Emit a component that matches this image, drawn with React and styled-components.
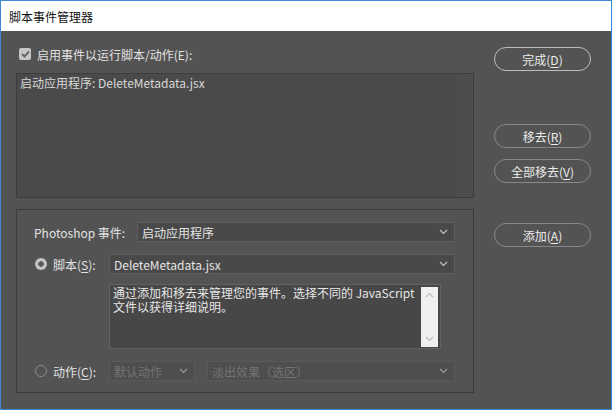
import styled, { createGlobalStyle } from 'styled-components';

const Global = createGlobalStyle`
  html, body { margin: 0; padding: 0; background: #535353; }
  body { font-family: "Noto Sans", "Noto Sans CJK SC", sans-serif; font-size: 12px; }
`;

const Window = styled.div`
  width: 612px;
  height: 410px;
  box-sizing: border-box;
  border: 1px solid #3c8ad6;
  display: flex;
  flex-direction: column;
  background: #535353;
`;

const TitleBar = styled.div`
  height: 30px;
  flex: none;
  background: #fff;
  color: #111;
  display: flex;
  align-items: center;
  padding-left: 8px;
  font-family: "Noto Sans CJK SC", sans-serif;
  font-size: 12px;
`;

const Body = styled.div`
  flex: 1;
  display: flex;
  padding: 13px 0 0 15px;
  color: #e2e2e2;
`;

const LeftCol = styled.div`
  width: 458px;
  display: flex;
  flex-direction: column;
`;

const RightCol = styled.div`
  width: 97px;
  margin-left: 20px;
  padding-top: 3px;
  display: flex;
  flex-direction: column;
`;

const Row = styled.div`
  display: flex;
  align-items: center;
  height: 20px;
  gap: ${p => p.$gap ?? 6}px;
  margin-top: ${p => p.$top || 0}px;
`;

const Check = styled.span`
  width: 12px;
  height: 12px;
  border-radius: 2px;
  background: #c6c6c6;
  display: flex;
  align-items: center;
  justify-content: center;
  margin-left: 3px;
`;

const Label = styled.span`
  font-family: "Noto Sans CJK SC", sans-serif;
  font-size: 12px;
  color: ${p => (p.$dim ? '#777' : '#e2e2e2')};
  white-space: nowrap;
  width: ${p => (p.$w ? p.$w + 'px' : 'auto')};
  padding-left: ${p => p.$pad || 0}px;
  box-sizing: border-box;
  flex: none;
`;

const Key = styled.span`
  text-decoration: ${p => (p.$plain ? 'none' : 'underline')};
  text-underline-offset: 2px;
`;

const ListBox = styled.div`
  margin-top: 9px;
  height: 125px;
  box-sizing: border-box;
  border: 1px solid #3d3d3d;
  background: linear-gradient(to right, #4a4a4a 0, #4a4a4a 440px, #4d4d4d 440px);
  padding: 0 3px;
  line-height: 17px;
  font-family: "Noto Sans CJK SC", sans-serif;
  color: #d8d8d8;
`;

const Group = styled.div`
  margin-top: 11px;
  height: 184px;
  box-sizing: border-box;
  border: 1px solid #3b3b3b;
  padding: 12px 18px 0 17px;
  display: flex;
  flex-direction: column;
`;

const Select = styled.div`
  height: 20px;
  box-sizing: border-box;
  border: 1px solid #5e5e5e;
  background: #494949;
  display: flex;
  align-items: center;
  justify-content: space-between;
  padding: 0 6px 0 4px;
  font-family: "Noto Sans CJK SC", sans-serif;
  color: ${p => (p.$dim ? '#747474' : '#e4e4e4')};
  width: ${p => (p.$w ? p.$w + 'px' : 'auto')};
  flex: ${p => (p.$w ? 'none' : '1')};
  margin-left: ${p => p.$ml || 0}px;
  ${p => p.$dim && 'border-color: #595959; background: #4e4e4e;'}
`;

const Radio = styled.span`
  width: 12px;
  height: 12px;
  box-sizing: border-box;
  border-radius: 50%;
  flex: none;
  margin-left: 1px;
  ${p =>
    p.$on
      ? 'background: radial-gradient(circle, #5a5a5a 0 2.5px, #c4c4c4 3px);'
      : 'border: 1.5px solid #8c8c8c;'}
`;

const TextArea = styled.div`
  margin: 10px 0 0 75px;
  width: 332px;
  height: 65px;
  box-sizing: border-box;
  border: 1px solid #626262;
  background: #474747;
  display: flex;
`;

const TextBody = styled.div`
  flex: 1;
  padding: 1px 3px;
  font-family: "Noto Sans CJK SC", sans-serif;
  line-height: 14px;
  color: #e6e6e6;
`;

const Scroll = styled.div`
  width: 17px;
  margin: 2px 2px 1px 0;
  background: #f0f0f0;
  display: flex;
  flex-direction: column;
  justify-content: space-between;
  align-items: center;
  padding: 5px 0;
  box-sizing: border-box;
`;

const Pill = styled.button`
  height: 24px;
  width: 97px;
  box-sizing: border-box;
  border-radius: 12px;
  border: 1.5px solid ${p => (p.$primary ? '#bdbdbd' : '#878787')};
  background: transparent;
  color: #ececec;
  font-family: "Noto Sans CJK SC", sans-serif;
  font-size: 12px;
  padding: 0;
  margin-top: ${p => p.$top || 0}px;
`;

const Chevron = ({ up, color = '#c2c2c2' }) => (
  <svg width="9" height="6" viewBox="0 0 9 6">
    <path
      d={up ? 'M1 5 L4.5 1.5 L8 5' : 'M1 1 L4.5 4.5 L8 1'}
      fill="none"
      stroke={color}
      strokeWidth="1.2"
    />
  </svg>
);

export default function App() {
  return (
    <>
      <Global />
      <Window>
        <TitleBar>脚本事件管理器</TitleBar>
        <Body>
          <LeftCol>
            <Row>
              <Check>
                <svg width="9" height="8" viewBox="0 0 9 8">
                  <path d="M1 4 L3.5 6.5 L8 1.5" fill="none" stroke="#555" strokeWidth="1.6" />
                </svg>
              </Check>
              <Label>启用事件以运行脚本/动作(<Key $plain>E</Key>):</Label>
            </Row>
            <ListBox>启动应用程序: DeleteMetadata.jsx</ListBox>
            <Group>
              <Row $gap={0}>
                <Label $w={103}>Photoshop 事件:</Label>
                <Select>
                  <span>启动应用程序</span>
                  <Chevron />
                </Select>
              </Row>
              <Row $gap={0} $top={12}>
                <Radio $on />
                <Label $w={62} $pad={6}>脚本(<Key>S</Key>):</Label>
                <Select>
                  <span>DeleteMetadata.jsx</span>
                  <Chevron />
                </Select>
              </Row>
              <TextArea>
                <TextBody>
                  通过添加和移去来管理您的事件。选择不同的 JavaScript
                  <br />
                  文件以获得详细说明。
                </TextBody>
                <Scroll>
                  <Chevron up color="#bdbdbd" />
                  <Chevron color="#bdbdbd" />
                </Scroll>
              </TextArea>
              <Row $gap={0} $top={12}>
                <Radio />
                <Label $w={62} $pad={6}>动作(<Key>C</Key>):</Label>
                <Select $dim $w={86}>
                  <span>默认动作</span>
                  <Chevron color="#9a9a9a" />
                </Select>
                <Select $dim $ml={12}>
                  <span>淡出效果（选区）</span>
                  <Chevron color="#9a9a9a" />
                </Select>
              </Row>
            </Group>
          </LeftCol>
          <RightCol>
            <Pill $primary>完成(<Key>D</Key>)</Pill>
            <Pill $top={53}>移去(<Key>R</Key>)</Pill>
            <Pill $top={11}>全部移去(<Key>V</Key>)</Pill>
            <Pill $top={40}>添加(<Key>A</Key>)</Pill>
          </RightCol>
        </Body>
      </Window>
    </>
  );
}
